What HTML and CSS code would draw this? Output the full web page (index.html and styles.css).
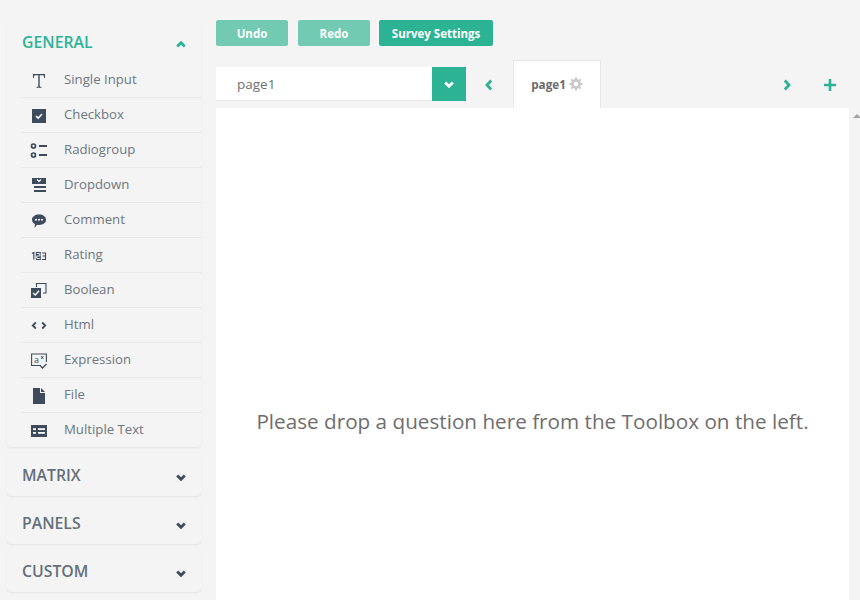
FILE: index.html
```html
<!DOCTYPE html>
<html lang="en">
<head>
<meta charset="utf-8">
<title>Survey Creator</title>
<link rel="stylesheet" href="styles.css">
</head>
<body>
<div class="app">
  <aside class="toolbox">
    <section class="group group-open">
      <header class="group-head open">
        <span>GENERAL</span>
        <svg class="chev" viewBox="0 0 10 7"><path d="M1.200 5.500 5 1.700 8.800 5.500" fill="none" stroke="currentColor" stroke-width="2.800"/></svg>
      </header>
      <ul class="items">
        <li><span class="ico"><svg width="16" height="16" viewBox="0 0 16 16"><path d="M2 1h12v4h-.8L12.600 2.300H8.700v11.200l1.800.5v.7h-5V14l1.800-.5V2.300H3.400L2.800 5H2z" fill="#3d4b5c"/></svg></span>Single Input</li>
        <li><span class="ico"><svg width="16" height="16" viewBox="0 0 16 16"><rect x="1" y="1" width="14" height="14" fill="#3d4b5c"/><path d="M5 8.200 7.200 10.200 11 6" fill="none" stroke="#fff" stroke-width="1.600"/></svg></span>Checkbox</li>
        <li><span class="ico"><svg width="18" height="16" viewBox="0 0 18 16"><circle cx="3.500" cy="3" r="2" fill="none" stroke="#3d4b5c" stroke-width="1.700"/><circle cx="3.500" cy="12" r="2" fill="none" stroke="#3d4b5c" stroke-width="1.700"/><path d="M9 2h8v2H9zM9 11h8v2H9z" fill="#3d4b5c"/></svg></span>Radiogroup</li>
        <li><span class="ico"><svg width="16" height="16" viewBox="0 0 16 16"><path d="M1 0h14v6H1zM3 8h12v2H3zM3 12h12v2H3z" fill="#3d4b5c"/><path d="M6 1.500 8 3.500 10 1.500" fill="none" stroke="#fff" stroke-width="1.200"/></svg></span>Dropdown</li>
        <li><span class="ico"><svg width="16" height="16" viewBox="0 0 16 16"><path d="M8 1.500c3.900 0 7 2 7 5.200s-3.100 5.200-7 5.200c-.7 0-1.400-.1-2-.2L3.500 15l.4-3.900C2 10.200 1 8.500 1 6.700c0-3.200 3.100-5.200 7-5.200z" fill="#3d4b5c"/><circle cx="5" cy="6.800" r="1" fill="#fff"/><circle cx="8" cy="6.800" r="1" fill="#fff"/><circle cx="11" cy="6.800" r="1" fill="#fff"/></svg></span>Comment</li>
        <li><span class="ico"><svg width="16" height="16" viewBox="0 0 16 16"><path d="M1 5.500 2.800 4.500V11.500" fill="none" stroke="#3d4b5c" stroke-width="1.200"/><rect x="4.800" y="4" width="5" height="8" fill="#3d4b5c"/><path d="M5.800 5.500h3V8h-3v2.500h3" fill="none" stroke="#fff" stroke-width=".9"/><path d="M11 5h3.500v6.500H11M11.500 8h3" fill="none" stroke="#3d4b5c" stroke-width="1.100"/></svg></span>Rating</li>
        <li><span class="ico"><svg width="16" height="16" viewBox="0 0 16 16"><path d="M5.500 4V.5h9.500v9.500h-3" fill="none" stroke="#3d4b5c" stroke-width="1.100"/><rect x="0" y="5" width="10" height="10" fill="#3d4b5c"/><path d="M2 10 4.300 12 8 7.800" fill="none" stroke="#fff" stroke-width="1.500"/></svg></span>Boolean</li>
        <li><span class="ico"><svg width="16" height="16" viewBox="0 0 16 16"><path d="M4.800 4.500 1.800 7.500 4.800 10.500M11.200 4.500 14.200 7.500 11.200 10.500" fill="none" stroke="#3d4b5c" stroke-width="1.800"/></svg></span>Html</li>
        <li><span class="ico"><svg width="16" height="16" viewBox="0 0 16 16"><path d="M10 12.500H.6V1h14.800v8" fill="none" stroke="#3d4b5c" stroke-width="1.100"/><path d="M9.500 13 11.500 15 15.500 11" fill="none" stroke="#3d4b5c" stroke-width="1.300"/><text x="3" y="10" class="ico-a">a</text><path d="M10 3l2.500 3M12.500 3 10 6" stroke="#3d4b5c" stroke-width=".9"/></svg></span>Expression</li>
        <li><span class="ico"><svg width="14" height="16" viewBox="0 0 14 16"><path d="M1 0h7v5h5v11H1zM9 0l4 4H9z" fill="#3d4b5c"/></svg></span>File</li>
        <li><span class="ico"><svg width="16" height="12" viewBox="0 0 16 12"><path d="M0 0h16v12H0z" fill="#3d4b5c"/><path d="M2 3.200h3v1.700H2zM7 3.200h7v1.700H7zM2 7.100h3v1.700H2zM7 7.100h7v1.700H7z" fill="#fff"/></svg></span>Multiple Text</li>
      </ul>
    </section>
    <section class="group">
      <header class="group-head"><span>MATRIX</span><svg class="chev" viewBox="0 0 10 7"><path d="M1.200 1.500 5 5.300 8.800 1.500" fill="none" stroke="currentColor" stroke-width="2.800"/></svg></header>
    </section>
    <section class="group">
      <header class="group-head"><span>PANELS</span><svg class="chev" viewBox="0 0 10 7"><path d="M1.200 1.500 5 5.300 8.800 1.500" fill="none" stroke="currentColor" stroke-width="2.800"/></svg></header>
    </section>
    <section class="group">
      <header class="group-head"><span>CUSTOM</span><svg class="chev" viewBox="0 0 10 7"><path d="M1.200 1.500 5 5.300 8.800 1.500" fill="none" stroke="currentColor" stroke-width="2.800"/></svg></header>
    </section>
  </aside>
  <main class="main">
    <div class="actions">
      <button class="btn faded">Undo</button>
      <button class="btn faded">Redo</button>
      <button class="btn wide">Survey Settings</button>
    </div>
    <div class="pages">
      <div class="select">
        <span class="select-value">page1</span>
        <span class="select-btn"><svg viewBox="0 0 10 7" class="chev"><path d="M1.200 1.500 5 5.300 8.800 1.500" fill="none" stroke="#fff" stroke-width="2.800"/></svg></span>
      </div>
      <span class="nav nav-left"><svg width="8" height="12" viewBox="0 0 8 12"><path d="M6.200 1.500 2 6 6.200 10.500" fill="none" stroke="#2cb394" stroke-width="2.800"/></svg></span>
      <div class="tab">
        <span>page1</span>
        <svg width="14" height="14" viewBox="0 0 14 14"><circle cx="7" cy="7" r="3.600" fill="none" stroke="#c8c8c8" stroke-width="2.600"/><path d="M7 .5v13M.5 7h13M2.400 2.400l9.200 9.200M11.600 2.400l-9.200 9.200" stroke="#c8c8c8" stroke-width="2"/><circle cx="7" cy="7" r="2.300" fill="#fff"/></svg>
      </div>
      <span class="nav nav-right"><svg width="8" height="12" viewBox="0 0 8 12"><path d="M1.800 1.500 6 6 1.800 10.500" fill="none" stroke="#2cb394" stroke-width="2.800"/></svg></span>
      <span class="nav nav-add"><svg width="12" height="12" viewBox="0 0 12 12"><path d="M4.700 0h2.600v4.700H12v2.600H7.300V12H4.700V7.300H0V4.700h4.700z" fill="#2cb394"/></svg></span>
    </div>
    <div class="canvas-row">
      <div class="canvas">Please drop a question here from the Toolbox on the left.</div>
      <div class="scroll"><span class="scroll-up"></span></div>
    </div>
  </main>
</div>
</body>
</html>
```
FILE: styles.css
```css
* { box-sizing: border-box; }
html, body { height: 100%; margin: 0; overflow: hidden; }
body {
  background: #f4f4f4;
  color: #6b6b6b;
  font-family: "Open Sans", "Noto Sans", "Liberation Sans", sans-serif;
}
.app { display: flex; height: 600px; }
.toolbox { width: 216px; padding: 23px 15px 0 7px; flex: none; }
.group {
  background: #f4f4f4;
  border-radius: 4px;
  box-shadow: 0 1px 2px rgba(0, 0, 0, .07);
  margin-bottom: 5px;
  padding-left: 15px;
}
.group-open { margin-bottom: 6px; }
.group-head {
  display: flex;
  justify-content: space-between;
  align-items: center;
  height: 43px;
  padding-right: 15px;
  font-size: 15.800px;
  font-weight: 600;
  color: #666f79;
}
.group-head.open { height: 40px; padding-bottom: 2px; color: #2cb394; }
.chev { width: 10px; height: 7px; color: #3d4b5c; margin-top: 6px; }
.group-head.open .chev { color: #2cb394; margin-top: 5px; }
.items { list-style: none; margin: 0; padding: 0; }
.items li {
  display: flex;
  align-items: center;
  height: 35px;
  padding-bottom: 3px;
  font-size: 13.200px;
  color: #6e7680;
  border-bottom: 1px solid #e6e8ea;
}
.items li:last-child { border-bottom: 0; height: 34px; padding-bottom: 2px; }
.ico { width: 42px; display: flex; justify-content: center; padding-right: 9px; margin-top: 4px; flex: none; }
.ico-a { font-size: 9px; fill: #3d4b5c; font-family: "Open Sans", sans-serif; }
.main { flex: 1; display: flex; flex-direction: column; min-width: 0; }
.actions { display: flex; gap: 10px; padding-top: 20px; height: 60px; }
.btn {
  height: 26px;
  width: 72px;
  padding: 0;
  border: 0;
  border-radius: 2px;
  background: #2cb394;
  color: #fff;
  font: 700 11.500px "Open Sans", sans-serif;
}
.btn.faded { background: #72cab3; }
.btn.wide { width: 114px; margin-left: -1px; }
.pages { display: flex; align-items: flex-start; height: 48px; }
.select {
  display: flex;
  width: 250px;
  height: 34px;
  margin-top: 7px;
  background: #fff;
  border-bottom: 1px solid #e8e8e8;
  font-size: 13.500px;
}
.select-value { flex: 1; padding-left: 21px; line-height: 34px; color: #707070; }
.select-btn { width: 34px; height: 34px; background: #2cb394; display: flex; align-items: center; justify-content: center; }
.select-btn .chev { margin: 0; }
.nav { display: flex; align-items: center; justify-content: center; height: 12px; margin-top: 19px; }
.nav-left { width: 47px; margin-left: -1px; margin-right: 1px; }
.tab {
  display: flex;
  align-items: center;
  justify-content: center;
  align-self: stretch;
  gap: 3px;
  width: 88px;
  padding-bottom: 2px;
  background: #fff;
  border: 1px solid #e8e8e8;
  border-bottom: 0;
  font-size: 11.700px;
  font-weight: 700;
  color: #6b6b6b;
}
.nav-right { margin-left: auto; width: 8px; margin-right: 33px; }
.nav-add { width: 12px; margin-right: 24px; }
.canvas-row { flex: 1; display: flex; min-height: 0; }
.canvas {
  flex: 1;
  background: #fff;
  padding-top: 298px;
  text-align: center;
  font-size: 20.700px;
  line-height: 30px;
  color: #6e6e6e;
}
.scroll { width: 11px; flex: none; position: relative; }
.scroll-up {
  position: absolute;
  left: 4px;
  top: 6px;
  border: 4px solid transparent;
  border-top: 0;
  border-bottom: 4px solid #a3a3a3;
}
```
